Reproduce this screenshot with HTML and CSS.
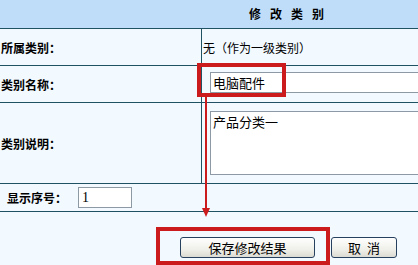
FILE: index.html
```html
<!DOCTYPE html>
<html lang="zh-CN">
<head>
    <meta charset="UTF-8">
    <title>修改类别</title>
    <link rel="stylesheet" href="styles.css">
</head>
<body>
    <div class="panel">
        <div class="panel-title">修改类别</div>

        <div class="form-row row-parent">
            <div class="label">所属类别：</div>
            <div class="value">无（作为一级类别）</div>
        </div>

        <div class="form-row row-name">
            <div class="label">类别名称：</div>
            <div class="value"><input type="text" class="text-input" value="电脑配件"></div>
        </div>

        <div class="form-row row-desc">
            <div class="label">类别说明：</div>
            <div class="value"><textarea class="text-area">产品分类一</textarea></div>
        </div>

        <div class="order-row">
            <span class="label-inline">显示序号：</span>
            <input type="text" class="order-input" value="1">
        </div>

        <div class="actions">
            <button class="btn btn-save">保存修改结果</button>
            <button class="btn btn-cancel">取 消</button>
        </div>

        <!-- annotation marks -->
        <div class="mark mark-name"></div>
        <div class="mark mark-save"></div>
        <div class="arrow"></div>
    </div>
</body>
</html>
```

FILE: styles.css
```css
* {
    margin: 0;
    padding: 0;
    box-sizing: border-box;
}

body {
    width: 418px;
    height: 265px;
    overflow: hidden;
    background: #f2f9ff;
    font-family: "Noto Sans CJK SC", "DejaVu Sans", sans-serif;
    font-size: 12px;
    color: #000;
}

.panel {
    position: relative;
    width: 418px;
    height: 265px;
    background: #f2f9ff;
}

.panel-title {
    height: 29px;
    line-height: 28px;
    padding-left: 249px;
    background: #bfddf8;
    border-bottom: 1px solid #1f5262;
    font-weight: bold;
    letter-spacing: 9px;
}

.form-row {
    display: grid;
    grid-template-columns: 201px 1fr;
    border-bottom: 1px solid #1f5262;
}

.form-row .label {
    padding-right: 140px;
    font-weight: bold;
    display: flex;
    align-items: center;
    justify-content: flex-end;
}

.form-row .value {
    border-left: 1px solid #1f5262;
    display: flex;
    align-items: center;
    padding-left: 1px;
}

.row-parent {
    height: 37px;
}

.row-name {
    height: 37px;
}

.row-name .value {
    padding-left: 8px;
    align-items: flex-start;
    padding-top: 6px;
}

.row-desc {
    height: 81px;
}

.row-desc .value {
    padding-left: 8px;
    align-items: flex-start;
    padding-top: 8px;
}

.text-input {
    width: 208px;
    height: 21px;
    border: 1px solid #8d9aa6;
    border-right: none;
    background: #fff;
    padding: 0 2px;
    font-family: "Noto Sans CJK SC", sans-serif;
    font-size: 13px;
    line-height: 19px;
}

.text-area {
    width: 208px;
    height: 64px;
    border: 1px solid #8d9aa6;
    border-right: none;
    background: #fff;
    padding: 1px 2px;
    resize: none;
    font-family: "Noto Sans CJK SC", sans-serif;
    font-size: 13px;
    line-height: 17px;
}

.order-row {
    height: 28px;
    border-bottom: 1px solid #1f5262;
    display: flex;
    align-items: center;
    padding-left: 7px;
}

.label-inline {
    font-weight: bold;
}

.order-input {
    margin-left: 11px;
    width: 54px;
    height: 21px;
    border: 1px solid #8d9aa6;
    background: #fff;
    padding: 0 3px;
    font-family: "Liberation Serif", serif;
    font-size: 14px;
}

.actions {
    display: flex;
    gap: 16px;
    padding-top: 25px;
    padding-left: 180px;
}

.btn {
    height: 21px;
    border: 1px solid #26415f;
    border-radius: 3px;
    background: linear-gradient(#fefefe, #f0f0ea 60%, #dcdbd3);
    font-family: "Noto Sans CJK SC", sans-serif;
    font-size: 13px;
    line-height: 19px;
    color: #000;
}

.btn-save {
    width: 135px;
}

.btn-cancel {
    width: 66px;
    word-spacing: 3px;
}

.mark {
    position: absolute;
    border: 4px solid #cc1b1d;
}

.mark-name {
    left: 197px;
    top: 63px;
    width: 89px;
    height: 34px;
}

.mark-save {
    left: 156px;
    top: 227px;
    width: 174px;
    height: 38px;
}

.arrow {
    position: absolute;
    left: 205px;
    top: 97px;
    width: 2px;
    height: 111px;
    background: #cc1b1d;
}

.arrow::after {
    content: "";
    position: absolute;
    left: -3px;
    bottom: -9px;
    border-left: 4px solid transparent;
    border-right: 4px solid transparent;
    border-top: 9px solid #cc1b1d;
}
```
